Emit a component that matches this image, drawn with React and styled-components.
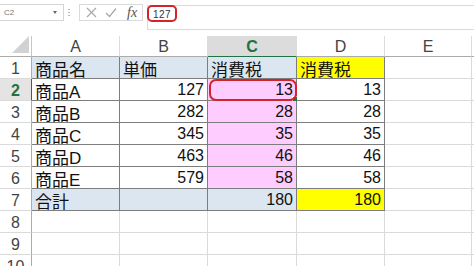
import React from 'react';
import styled, { createGlobalStyle } from 'styled-components';

const GlobalStyle = createGlobalStyle`
  body {
    margin: 0;
    background: #fff;
    font-family: "Liberation Sans", "Noto Sans CJK JP", sans-serif;
    overflow: hidden;
  }
`;

const Window = styled.div`
  width: 474px;
  height: 266px;
  overflow: hidden;
  display: flex;
  flex-direction: column;
`;

const FormulaBar = styled.div`
  display: flex;
  align-items: flex-start;
  height: 36px;
  flex-shrink: 0;
`;

const NameBox = styled.div`
  margin-top: 4px;
  width: 64px;
  height: 17px;
  box-sizing: border-box;
  border: 1px solid #d6d6d6;
  border-left: none;
  display: flex;
  align-items: center;
  justify-content: space-between;
  padding: 0 6px 0 4px;
  font-size: 8px;
  color: #777;
`;

const Caret = styled.span`
  width: 0;
  height: 0;
  border-left: 2.5px solid transparent;
  border-right: 2.5px solid transparent;
  border-top: 3px solid #666;
`;

const Grip = styled.div`
  margin: 8px 0 0 4px;
  width: 2px;
  height: 9px;
  background: radial-gradient(circle, #b5b5b5 0.8px, transparent 1px) 0 0 / 2px 3px;
`;

const FnButtons = styled.div`
  margin: 4px 0 0 9px;
  width: 64px;
  height: 17px;
  box-sizing: border-box;
  border: 1px solid #dadada;
  display: flex;
  align-items: center;
  gap: 8px;
  padding-left: 6px;
`;

const Fx = styled.span`
  font-family: "Liberation Serif", serif;
  font-style: italic;
  font-size: 14px;
  color: #555;
  line-height: 1;
  margin-left: 2px;
`;

const FormulaInput = styled.div`
  position: relative;
  margin: 5px 0 0 4px;
  flex: 1;
  height: 25px;
  box-sizing: border-box;
  border: 1px solid #dadada;
  border-right: none;
  display: flex;
  align-items: flex-start;
  padding: 3px 0 0 5px;
  font-size: 10px;
  color: #333;
  letter-spacing: 0.4px;
`;

const Callout = styled.span`
  position: absolute;
  box-sizing: border-box;
  border: ${(p) => p.$stroke}px solid #d3232b;
  border-radius: ${(p) => p.$radius}px;
  left: ${(p) => p.$l}px;
  top: ${(p) => p.$t}px;
  width: ${(p) => p.$w}px;
  height: ${(p) => p.$h}px;
  pointer-events: none;
`;

const Sheet = styled.div`
  display: grid;
  grid-template-columns: 32px 88px 88px 89px 88px 87px 1fr;
  grid-template-rows: 21px;
  grid-auto-rows: 22px;
`;

const Corner = styled.div`
  box-sizing: border-box;
  border-right: 1px solid #c6c6c6;
  border-bottom: 1px solid #ababab;
  display: flex;
  align-items: flex-end;
  justify-content: flex-end;
  padding: 0 2px 3px 0;
`;

const Triangle = styled.span`
  width: 0;
  height: 0;
  border-left: 17px solid transparent;
  border-bottom: 17px solid #d2d2d2;
`;

const ColHead = styled.div`
  box-sizing: border-box;
  border-right: 1px solid #dcdcdc;
  border-bottom: 1px solid ${(p) => (p.$active ? '#217346' : '#ababab')};
  background: ${(p) => (p.$active ? '#dcdcdc' : '#fff')};
  color: ${(p) => (p.$active ? '#217346' : '#444')};
  font-weight: ${(p) => (p.$active ? 700 : 400)};
  font-size: 16px;
  display: flex;
  align-items: center;
  justify-content: center;
  padding-top: 1px;
`;

const RowHead = styled.div`
  box-sizing: border-box;
  border-right: 1px solid ${(p) => (p.$active ? '#217346' : '#ababab')};
  border-bottom: 1px solid #dadada;
  background: ${(p) => (p.$active ? '#e4e4e4' : '#fff')};
  color: ${(p) => (p.$active ? '#217346' : '#444')};
  font-weight: ${(p) => (p.$active ? 700 : 400)};
  font-size: 16px;
  display: flex;
  align-items: center;
  justify-content: center;
  padding-top: 2px;
`;

const Cell = styled.div`
  position: relative;
  box-sizing: border-box;
  border-right: 1px solid ${(p) => (p.$ruled ? '#7d7d7d' : '#dadada')};
  border-bottom: 1px solid ${(p) => (p.$ruled ? '#7d7d7d' : '#dadada')};
  background: ${(p) => p.$bg || '#fff'};
  color: #111;
  font-size: ${(p) => (p.$right ? 16 : 17)}px;
  display: flex;
  align-items: center;
  justify-content: ${(p) => (p.$right ? 'flex-end' : 'flex-start')};
  padding: 1px 3px 0 3px;
  white-space: nowrap;
`;

const FillHandle = styled.span`
  position: absolute;
  right: -3px;
  bottom: -3px;
  width: 5px;
  height: 5px;
  background: #217346;
  border: 1px solid #fff;
`;

const BLUE = '#dce6f1';
const PINK = '#ffccff';
const YELLOW = '#ffff00';

const rows = [
  ['商品名', '単価', '消費税', '消費税'],
  ['商品A', 127, 13, 13],
  ['商品B', 282, 28, 28],
  ['商品C', 345, 35, 35],
  ['商品D', 463, 46, 46],
  ['商品E', 579, 58, 58],
  ['合計', '', 180, 180],
];

function cellBg(r, c) {
  if (r === 0 || r === 6) return c === 3 ? YELLOW : BLUE;
  if (c === 2) return PINK;
  return null;
}

function CrossIcon() {
  return (
    <svg width="11" height="11" viewBox="0 0 11 11">
      <path d="M1 1 L10 10 M10 1 L1 10" stroke="#a8a8a8" strokeWidth="1.2" fill="none" />
    </svg>
  );
}

function CheckIcon() {
  return (
    <svg width="12" height="11" viewBox="0 0 12 11">
      <path d="M1 6 L4.5 9.5 L11 1.5" stroke="#a8a8a8" strokeWidth="1.2" fill="none" />
    </svg>
  );
}

export default function App() {
  const cols = ['A', 'B', 'C', 'D', 'E', ''];
  return (
    <Window>
      <GlobalStyle />
      <FormulaBar>
        <NameBox>
          C2
          <Caret />
        </NameBox>
        <Grip />
        <FnButtons>
          <CrossIcon />
          <CheckIcon />
          <Fx>fx</Fx>
        </FnButtons>
        <FormulaInput>
          127
          <Callout $l={-1} $t={-1} $w={30} $h={17} $radius={5} $stroke={2} />
        </FormulaInput>
      </FormulaBar>
      <Sheet>
        <Corner>
          <Triangle />
        </Corner>
        {cols.map((c, i) => (
          <ColHead key={i} $active={c === 'C'}>
            {c}
          </ColHead>
        ))}
        {Array.from({ length: 10 }, (_, r) => (
          <React.Fragment key={r}>
            <RowHead $active={r === 1}>{r + 1}</RowHead>
            {cols.map((_, c) => {
              const inTable = r < 7 && c < 4;
              const value = inTable ? rows[r][c] : '';
              const right = inTable && r > 0 && c > 0;
              return (
                <Cell
                  key={c}
                  $ruled={inTable}
                  $bg={inTable ? cellBg(r, c) : null}
                  $right={right}
                >
                  {value}
                  {r === 1 && c === 2 && (
                    <>
                      <FillHandle />
                      <Callout $l={1} $t={0} $w={88} $h={22} $radius={7} $stroke={2.5} />
                    </>
                  )}
                </Cell>
              );
            })}
          </React.Fragment>
        ))}
      </Sheet>
    </Window>
  );
}
